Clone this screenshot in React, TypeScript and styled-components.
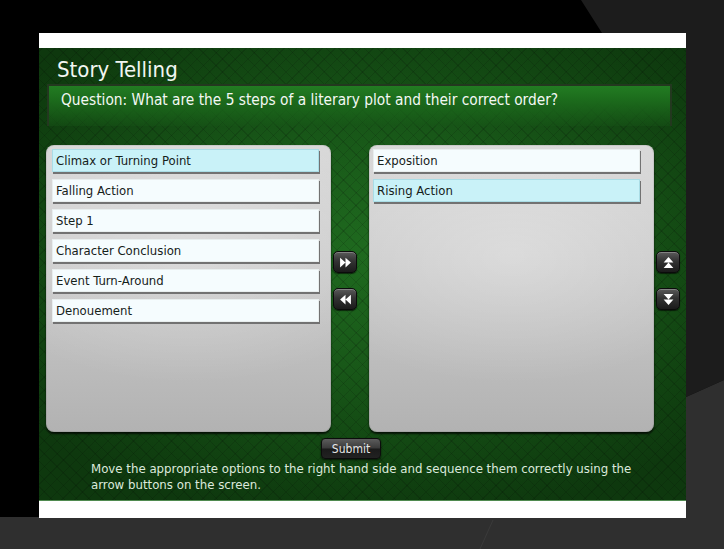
import styled, { createGlobalStyle } from "styled-components";

const GlobalStyle = createGlobalStyle`
  html, body {
    margin: 0;
    padding: 0;
    background: #000;
  }
  body {
    font-family: "DejaVu Sans Condensed", "DejaVu Sans", sans-serif;
  }
`;

const Screen = styled.div`
  position: relative;
  width: 724px;
  height: 549px;
  overflow: hidden;
  background: #000;
`;

const Backdrop = styled.svg`
  position: absolute;
  inset: 0;
  z-index: 0;
`;

const Stage = styled.div`
  position: relative;
  z-index: 1;
  width: 647px;
  margin: 33px 0 0 39px;
  display: flex;
  flex-direction: column;
`;

const WhiteBar = styled.div<{ $h: number }>`
  height: ${(p) => p.$h}px;
  background: #fff;
`;

const Board = styled.div`
  height: 452px;
  display: flex;
  flex-direction: column;
  color: #eef5ee;
  background:
    repeating-linear-gradient(45deg, rgba(0, 0, 0, 0.13) 0 1px, transparent 1px 9px),
    repeating-linear-gradient(-45deg, rgba(0, 0, 0, 0.13) 0 1px, transparent 1px 9px),
    radial-gradient(ellipse 70% 60% at 52% 45%, #1f6a1f 0%, #185718 45%, #104010 85%, #0e380e 100%);
  border-bottom: 1px solid #4f8a4f;
`;

const Title = styled.h1`
  margin: 0;
  padding: 9px 0 0 18px;
  height: 27px;
  font-size: 22px;
  line-height: 26px;
  font-weight: normal;
  color: #f2f6f2;
`;

const Question = styled.div`
  margin: 0 14px 0 8px;
  height: 42px;
  padding: 5px 0 0 12px;
  box-sizing: border-box;
  border: 2px solid #23381f;
  border-bottom: none;
  background: linear-gradient(to bottom, #227c22 0%, #1c6b1c 35%, rgba(22, 84, 22, 0.4) 100%);
  font-size: 15.3px;
  line-height: 19px;
  color: #f4f8f4;
`;

const Exercise = styled.div`
  margin-top: 19px;
  display: grid;
  grid-template-columns: 7px 285px 38px 285px 32px;
  height: 287px;
`;

const Panel = styled.div<{ $col: number; $inset: number }>`
  grid-column: ${(p) => p.$col};
  border-radius: 8px;
  padding: 4px 0 0 ${(p) => p.$inset}px;
  box-sizing: border-box;
  display: flex;
  flex-direction: column;
  gap: 7px;
  background:
    radial-gradient(ellipse 80% 45% at 50% 38%, rgba(255, 255, 255, 0.3) 0%, rgba(255, 255, 255, 0) 100%),
    linear-gradient(to bottom, #d9d9d9 0%, #c9c9c9 45%, #b2b2b2 100%);
  box-shadow: 0 2px 2px rgba(0, 0, 0, 0.75), inset 0 0 0 1px rgba(0, 0, 0, 0.08);
`;

const Item = styled.div<{ $selected?: boolean }>`
  width: 267px;
  height: 23px;
  box-sizing: border-box;
  padding: 2px 0 0 3px;
  font-size: 13px;
  line-height: 17px;
  color: #15211a;
  background: ${(p) => (p.$selected ? "#c9f2f8" : "#f5fcfe")};
  border: 1px solid ${(p) => (p.$selected ? "#aadde6" : "#e8eeee")};
  box-shadow: 1px 2px 0 #727272;
`;

const ButtonStack = styled.div<{ $col: number; $offset: number }>`
  grid-column: ${(p) => p.$col};
  display: flex;
  flex-direction: column;
  gap: 15px;
  padding: 106px 0 0 ${(p) => p.$offset}px;
`;

const ArrowButton = styled.button`
  width: 24px;
  height: 22px;
  padding: 0;
  border: 1px solid #0b0b0b;
  border-radius: 5px;
  display: flex;
  align-items: center;
  justify-content: center;
  background: linear-gradient(to bottom, #5a5a5a 0%, #333 45%, #1b1b1b 100%);
  box-shadow: inset 0 1px 0 rgba(255, 255, 255, 0.25), 0 1px 1px rgba(0, 0, 0, 0.6);
  cursor: pointer;
`;

const SubmitRow = styled.div`
  display: flex;
  padding: 6px 0 0 282px;
`;

const SubmitButton = styled.button`
  width: 60px;
  height: 21px;
  padding: 0;
  border: 1px solid #0c0c0c;
  border-radius: 4px;
  font-family: inherit;
  font-size: 12px;
  color: #e6e6e6;
  background: linear-gradient(to bottom, #5c5c5c 0%, #3a3a3a 48%, #1a1a1a 52%, #222 100%);
  box-shadow: 0 1px 2px rgba(0, 0, 0, 0.7);
  cursor: pointer;
`;

const Instructions = styled.p`
  margin: 2px 0 0 52px;
  width: 548px;
  font-size: 13.1px;
  line-height: 16px;
  color: #dce9dc;
`;

type Dir = "right" | "left" | "up" | "down";

// double-triangle glyph, rotated for each direction
const ArrowIcon = ({ dir }: { dir: Dir }) => {
  const rotate = { right: 0, down: 90, left: 180, up: 270 }[dir];
  return (
    <svg width="13" height="13" viewBox="0 0 12 12" style={{ transform: `rotate(${rotate}deg)` }}>
      <path d="M1 1.5 L6 6 L1 10.5 Z M6 1.5 L11 6 L6 10.5 Z" fill="#fff" />
    </svg>
  );
};

const available = [
  { label: "Climax or Turning Point", selected: true },
  { label: "Falling Action" },
  { label: "Step 1" },
  { label: "Character Conclusion" },
  { label: "Event Turn-Around" },
  { label: "Denouement" },
];

const ordered = [{ label: "Exposition" }, { label: "Rising Action", selected: true }];

const App = () => (
  <Screen>
    <GlobalStyle />
    <Backdrop width="724" height="549" viewBox="0 0 724 549">
      <polygon points="581,0 724,0 724,380 686,397 686,517 610,517 602,33" fill="#1c1c1c" />
      <polygon points="686,397 724,380 724,549 0,549 0,517 686,517" fill="#2f2f2f" />
      <line x1="480" y1="549" x2="493" y2="520" stroke="#3a3a3a" strokeWidth="1" />
    </Backdrop>
    <Stage>
      <WhiteBar $h={15} />
      <Board>
        <Title>Story Telling</Title>
        <Question>Question: What are the 5 steps of a literary plot and their correct order?</Question>
        <Exercise>
          <Panel $col={2} $inset={6}>
            {available.map((it) => (
              <Item key={it.label} $selected={it.selected}>
                {it.label}
              </Item>
            ))}
          </Panel>
          <ButtonStack $col={3} $offset={2}>
            <ArrowButton aria-label="Move right">
              <ArrowIcon dir="right" />
            </ArrowButton>
            <ArrowButton aria-label="Move left">
              <ArrowIcon dir="left" />
            </ArrowButton>
          </ButtonStack>
          <Panel $col={4} $inset={4}>
            {ordered.map((it) => (
              <Item key={it.label} $selected={it.selected}>
                {it.label}
              </Item>
            ))}
          </Panel>
          <ButtonStack $col={5} $offset={2}>
            <ArrowButton aria-label="Move up">
              <ArrowIcon dir="up" />
            </ArrowButton>
            <ArrowButton aria-label="Move down">
              <ArrowIcon dir="down" />
            </ArrowButton>
          </ButtonStack>
        </Exercise>
        <SubmitRow>
          <SubmitButton>Submit</SubmitButton>
        </SubmitRow>
        <Instructions>
          Move the appropriate options to the right hand side and sequence them correctly using the arrow
          buttons on the screen.
        </Instructions>
      </Board>
      <WhiteBar $h={17} />
    </Stage>
  </Screen>
);

export default App;
